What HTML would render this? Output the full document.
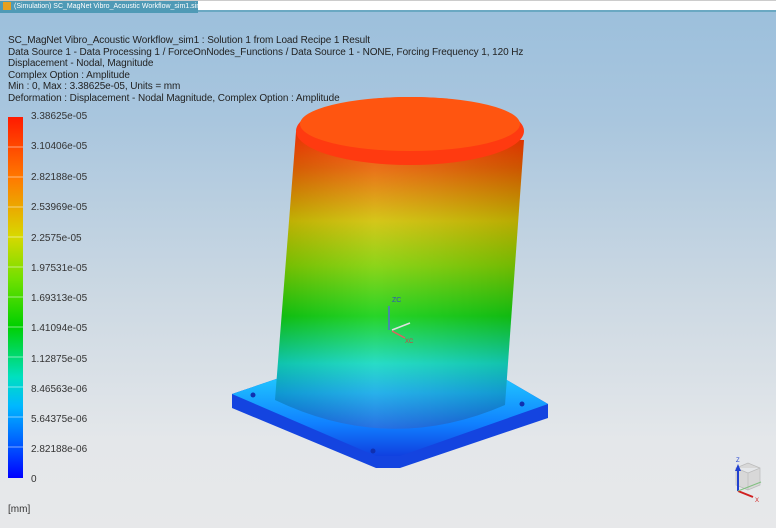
<!DOCTYPE html>
<html><head><meta charset="utf-8"><style>
html,body{margin:0;padding:0}
body{width:776px;height:528px;overflow:hidden;position:relative;font-family:"Liberation Sans",sans-serif;background:linear-gradient(#9bbfdc 0px,#a9c6de 120px,#cdd9e3 300px,#e4e7ea 440px,#e7e8ea 528px)}
.tabbar{position:absolute;left:0;top:0;width:776px;height:12px;background:#fff;border-bottom:2px solid #6aa8c2;border-top:1px solid #ccc;box-sizing:border-box}
.tab{position:absolute;left:0;top:0;width:198px;height:12px;background:#4f9ab6;color:#fff;font-size:7px;line-height:11px;padding-left:14px;box-sizing:border-box;white-space:nowrap;overflow:hidden}
.info{position:absolute;left:8px;top:35px;font-size:10px;line-height:11.6px;color:#222;white-space:nowrap;letter-spacing:-0.08px}
.lab{position:absolute;left:31px;font-size:10px;color:#333}
</style></head><body>
<div class="tabbar"><div class="tab"><span style="position:absolute;left:3px;top:1px;width:8px;height:8px;background:#e8a020"></span>(Simulation) SC_MagNet Vibro_Acoustic Workflow_sim1.sim ▯ ✕</div></div>
<div class="info">SC_MagNet Vibro_Acoustic Workflow_sim1 : Solution 1 from Load Recipe 1 Result<br>Data Source 1 - Data Processing 1 / ForceOnNodes_Functions / Data Source 1 - NONE, Forcing Frequency 1, 120 Hz<br>Displacement - Nodal, Magnitude<br>Complex Option : Amplitude<br>Min : 0, Max : 3.38625e-05, Units = mm<br>Deformation : Displacement - Nodal Magnitude, Complex Option : Amplitude</div>
<div style="position:absolute;left:8px;top:117px;width:15px;height:361px;background:linear-gradient(#ff1a00,#ff7a00 17%,#d8d800 33%,#70e000 45%,#00d000 58%,#00e0c0 72%,#00b8ff 80%,#0060ff 90%,#0000ff)"></div>
<svg style="position:absolute;left:8px;top:117px" width="15" height="361"><g stroke="#fff" stroke-opacity=".5"><line x1="0" x2="15" y1="30" y2="30"/><line x1="0" x2="15" y1="60" y2="60"/><line x1="0" x2="15" y1="90" y2="90"/><line x1="0" x2="15" y1="120" y2="120"/><line x1="0" x2="15" y1="150" y2="150"/><line x1="0" x2="15" y1="180" y2="180"/><line x1="0" x2="15" y1="210" y2="210"/><line x1="0" x2="15" y1="240" y2="240"/><line x1="0" x2="15" y1="270" y2="270"/><line x1="0" x2="15" y1="300" y2="300"/><line x1="0" x2="15" y1="330" y2="330"/></g></svg>
<div class="lab" style="top:111px">3.38625e-05</div>
<div class="lab" style="top:141px">3.10406e-05</div>
<div class="lab" style="top:172px">2.82188e-05</div>
<div class="lab" style="top:202px">2.53969e-05</div>
<div class="lab" style="top:233px">2.2575e-05</div>
<div class="lab" style="top:263px">1.97531e-05</div>
<div class="lab" style="top:293px">1.69313e-05</div>
<div class="lab" style="top:323px">1.41094e-05</div>
<div class="lab" style="top:354px">1.12875e-05</div>
<div class="lab" style="top:384px">8.46563e-06</div>
<div class="lab" style="top:414px">5.64375e-06</div>
<div class="lab" style="top:444px">2.82188e-06</div>
<div class="lab" style="top:474px">0</div>
<div class="lab" style="top:504px;left:8px">[mm]</div>
<svg style="position:absolute;left:0;top:0" width="776" height="528">
<defs>
<linearGradient id="side" x1="0" y1="0" x2="0" y2="1">
<stop offset="0" stop-color="#ff3000"/><stop offset=".12" stop-color="#e86000"/><stop offset=".3" stop-color="#d0c000"/><stop offset=".45" stop-color="#80d000"/><stop offset=".62" stop-color="#10d010"/><stop offset=".78" stop-color="#10d8c0"/><stop offset=".88" stop-color="#10a8e8"/><stop offset="1" stop-color="#1060e0"/></linearGradient>
<linearGradient id="shade" x1="0" y1="0" x2="1" y2="0"><stop offset="0" stop-color="#000" stop-opacity=".1"/><stop offset=".4" stop-color="#fff" stop-opacity=".1"/><stop offset="1" stop-color="#000" stop-opacity=".12"/></linearGradient>
<linearGradient id="base" x1="0" y1="0" x2="0" y2="1"><stop offset="0" stop-color="#20c8ff"/><stop offset=".6" stop-color="#1080ff"/><stop offset="1" stop-color="#1040e0"/></linearGradient>
</defs>
<path d="M232 394 L285 376 L500 376 L548 404 L548 418 L400 468 L376 468 L232 408 Z" fill="#1444e0"/>
<path d="M232 394 L285 376 L500 376 L548 404 L400 456 L376 456 Z" fill="url(#base)"/>
<circle cx="253" cy="395" r="2.5" fill="#1030b0"/><circle cx="522" cy="404" r="2.5" fill="#1030b0"/><circle cx="373" cy="451" r="2.5" fill="#1030b0"/>
<path d="M296 132 L275 400 Q390 455 505 405 L524 140 Z" fill="url(#side)"/>
<path d="M296 132 L275 400 Q390 455 505 405 L524 140 Z" fill="url(#shade)"/>
<ellipse cx="410" cy="131" rx="114" ry="34" fill="#ff3a10"/>
<ellipse cx="410" cy="124" rx="110" ry="27" fill="#ff5510"/>
<g stroke-width="1.5"><line x1="389" y1="330" x2="389" y2="306" stroke="#5070d0"/><line x1="392" y1="330" x2="410" y2="323" stroke="#e0e0e0"/><line x1="392" y1="331" x2="405" y2="338" stroke="#e06060"/></g>
<text x="392" y="302" font-size="7" fill="#3050c0" font-family="Liberation Sans">ZC</text>
<text x="405" y="343" font-size="6" fill="#d04040" font-family="Liberation Sans">XC</text>
<g transform="translate(700,440)">
<path d="M48 33 L60 28 L60 45 L48 50 Z M48 33 L36 28 L36 45 L48 50 M36 28 L48 23 L60 28" fill="#d8d8d8" stroke="#bbb" stroke-width=".7"/>
<line x1="38" y1="51" x2="38" y2="29" stroke="#2040d0" stroke-width="2"/><path d="M35 31 L38 24 L41 31Z" fill="#2040d0"/>
<line x1="38" y1="51" x2="53" y2="57" stroke="#d02020" stroke-width="2"/><line x1="38" y1="51" x2="61" y2="42" stroke="#80c080" stroke-width="1"/>
<text x="36" y="22" font-size="6" fill="#2040d0" font-family="Liberation Sans">Z</text><text x="55" y="62" font-size="6" fill="#d02020" font-family="Liberation Sans">X</text></g>
</svg>
</body></html>
